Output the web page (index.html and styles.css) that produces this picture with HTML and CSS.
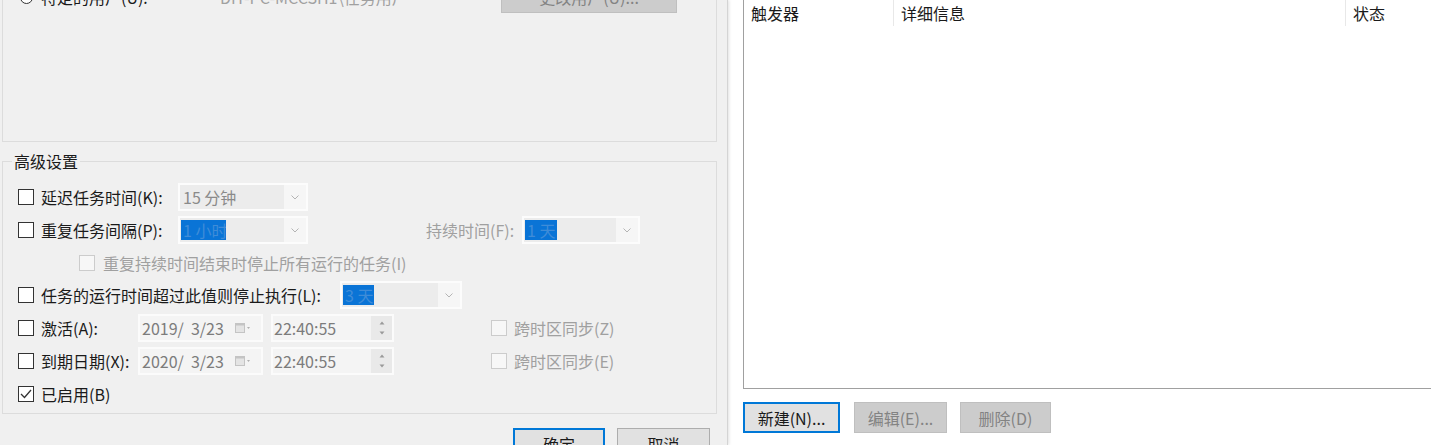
FILE: index.html
```html
<!DOCTYPE html>
<html lang="zh-CN">
<head>
    <meta charset="UTF-8">
    <title>触发器</title>
    <link rel="stylesheet" href="styles.css">
</head>
<body>
    <div class="screen">
        <div class="dialog">
            <!-- top group, mostly scrolled out of view -->
            <div class="userGroup">
                <div class="userRow">
                    <span class="radio"></span>
                    <span class="userLabel">特定的用户(U):</span>
                    <span class="userName">DIT-PC-MCCSH1\任务用户</span>
                    <button class="btn btn-disabled changeUser">更改用户(U)...</button>
                </div>
            </div>

            <fieldset class="advanced">
                <legend>高级设置</legend>
                <div class="rows">
                    <div class="row">
                        <span class="check"></span>
                        <span class="lbl lbl-wide">延迟任务时间(K):</span>
                        <div class="combo combo-main">
                            <div class="comboField"><span class="comboText">15 分钟</span></div>
                            <div class="comboArrow"><svg width="8" height="5" viewBox="0 0 8 5"><path d="M0.5 0.5 L4 4 L7.5 0.5" fill="none" stroke="#b4b4b4" stroke-width="1"/></svg></div>
                        </div>
                    </div>
                    <div class="row">
                        <span class="check"></span>
                        <span class="lbl lbl-wide">重复任务间隔(P):</span>
                        <div class="combo combo-main">
                            <div class="comboField"><span class="selected">1 小时</span></div>
                            <div class="comboArrow"><svg width="8" height="5" viewBox="0 0 8 5"><path d="M0.5 0.5 L4 4 L7.5 0.5" fill="none" stroke="#b4b4b4" stroke-width="1"/></svg></div>
                        </div>
                        <span class="lbl lbl-grey durationLabel">持续时间(F):</span>
                        <div class="combo combo-duration">
                            <div class="comboField"><span class="selected">1 天</span></div>
                            <div class="comboArrow"><svg width="8" height="5" viewBox="0 0 8 5"><path d="M0.5 0.5 L4 4 L7.5 0.5" fill="none" stroke="#b4b4b4" stroke-width="1"/></svg></div>
                        </div>
                    </div>
                    <div class="row row-sub">
                        <span class="check check-disabled"></span>
                        <span class="lbl lbl-grey">重复持续时间结束时停止所有运行的任务(I)</span>
                    </div>
                    <div class="row">
                        <span class="check"></span>
                        <span class="lbl lbl-long">任务的运行时间超过此值则停止执行(L):</span>
                        <div class="combo combo-stop">
                            <div class="comboField"><span class="selected">3 天</span></div>
                            <div class="comboArrow"><svg width="8" height="5" viewBox="0 0 8 5"><path d="M0.5 0.5 L4 4 L7.5 0.5" fill="none" stroke="#b4b4b4" stroke-width="1"/></svg></div>
                        </div>
                    </div>
                    <div class="row">
                        <span class="check"></span>
                        <span class="lbl lbl-short">激活(A):</span>
                        <div class="picker datePicker">
                            <span class="pickerText">2019/&nbsp; 3/23</span>
                            <svg class="calIcon" width="16" height="10" viewBox="0 0 16 10"><rect x="0.5" y="0.5" width="9" height="9" fill="#e4e4e4" stroke="#c4c4c4"/><rect x="0.5" y="0.5" width="9" height="2" fill="#c4c4c4"/><path d="M12 4 L15 4 L13.5 6 Z" fill="#b0b0b0"/></svg>
                        </div>
                        <div class="picker timePicker">
                            <span class="pickerText">22:40:55</span>
                            <div class="spin">
                                <svg width="6" height="4" viewBox="0 0 6 4"><path d="M3 0.5 L5.5 3.5 L0.5 3.5 Z" fill="#9a9a9a"/></svg>
                                <svg width="6" height="4" viewBox="0 0 6 4"><path d="M0.5 0.5 L5.5 0.5 L3 3.5 Z" fill="#9a9a9a"/></svg>
                            </div>
                        </div>
                        <span class="check check-disabled syncCheck"></span>
                        <span class="lbl lbl-grey">跨时区同步(Z)</span>
                    </div>
                    <div class="row">
                        <span class="check"></span>
                        <span class="lbl lbl-short">到期日期(X):</span>
                        <div class="picker datePicker">
                            <span class="pickerText">2020/&nbsp; 3/23</span>
                            <svg class="calIcon" width="16" height="10" viewBox="0 0 16 10"><rect x="0.5" y="0.5" width="9" height="9" fill="#e4e4e4" stroke="#c4c4c4"/><rect x="0.5" y="0.5" width="9" height="2" fill="#c4c4c4"/><path d="M12 4 L15 4 L13.5 6 Z" fill="#b0b0b0"/></svg>
                        </div>
                        <div class="picker timePicker">
                            <span class="pickerText">22:40:55</span>
                            <div class="spin">
                                <svg width="6" height="4" viewBox="0 0 6 4"><path d="M3 0.5 L5.5 3.5 L0.5 3.5 Z" fill="#9a9a9a"/></svg>
                                <svg width="6" height="4" viewBox="0 0 6 4"><path d="M0.5 0.5 L5.5 0.5 L3 3.5 Z" fill="#9a9a9a"/></svg>
                            </div>
                        </div>
                        <span class="check check-disabled syncCheck"></span>
                        <span class="lbl lbl-grey">跨时区同步(E)</span>
                    </div>
                    <div class="row">
                        <span class="check"><svg width="14" height="14" viewBox="0 0 14 14"><path d="M2 7 L5.5 10.5 L12 3" fill="none" stroke="#333" stroke-width="1.3"/></svg></span>
                        <span class="lbl">已启用(B)</span>
                    </div>
                </div>
            </fieldset>

            <div class="dialogButtons">
                <button class="btn btn-default okButton">确定</button>
                <button class="btn cancelButton">取消</button>
            </div>
        </div>

        <div class="triggers">
            <div class="list">
                <div class="listHead">
                    <div class="col col-trigger">触发器</div>
                    <div class="col col-detail">详细信息</div>
                    <div class="col col-status">状态</div>
                </div>
            </div>
            <div class="listButtons">
                <button class="btn btn-default newButton">新建(N)...</button>
                <button class="btn btn-disabled editButton">编辑(E)...</button>
                <button class="btn btn-disabled deleteButton">删除(D)</button>
            </div>
        </div>
    </div>
</body>
</html>
```

FILE: styles.css
```css
* {
    margin: 0;
    padding: 0;
    box-sizing: border-box;
}
html, body {
    width: 1431px;
    height: 445px;
    overflow: hidden;
}
body {
    font-family: "Noto Sans CJK SC", "Noto Sans", sans-serif;
    font-size: 16px;
    color: #1a1a1a;
    background-color: #fff;
}
.screen {
    display: flex;
    height: 445px;
}

/* left dialog */
.dialog {
    width: 728px;
    flex-shrink: 0;
    height: 100%;
    background-color: #f0f0f0;
    padding-left: 2px;
    border-right: 1px solid #d4d4d4;
    box-shadow: 1px 0 3px rgba(0, 0, 0, 0.12);
    position: relative;
    z-index: 1;
}
.userGroup {
    width: 715px;
    height: 172px;
    margin-top: -30px;
    border: 1px solid #dcdcdc;
    padding-top: 12px;
}
.userRow {
    display: flex;
    align-items: center;
    height: 28px;
}
.radio {
    width: 13px;
    height: 13px;
    border: 1px solid #333;
    border-radius: 50%;
    background-color: #fff;
    margin-left: 17px;
    margin-right: 8px;
}
.userLabel {
    width: 179px;
    line-height: 20px;
}
.userName {
    width: 281px;
    color: #a0a0a0;
    line-height: 20px;
}
.changeUser {
    width: 176px;
    height: 28px;
}

.advanced {
    width: 715px;
    margin-top: 9px;
    border: 1px solid #dcdcdc;
    padding: 12px 0 5px 15px;
    min-width: 0;
}
.advanced legend {
    margin-left: -6px;
    padding: 0 2px;
    line-height: 20px;
}
.rows {
    display: flex;
    flex-direction: column;
    gap: 5px;
}
.row {
    display: flex;
    align-items: center;
    height: 28px;
}
.row-sub {
    height: 27px;
    padding-left: 61px;
}
.check {
    width: 16px;
    height: 16px;
    flex-shrink: 0;
    border: 1px solid #333;
    background-color: #fff;
    margin-right: 7px;
    display: flex;
    align-items: center;
    justify-content: center;
}
.check-disabled {
    border-color: #cccccc;
    background-color: #f7f7f7;
    margin-right: 8px;
}
.syncCheck {
    margin-left: 97px;
    margin-right: 7px;
}
.lbl {
    line-height: 20px;
    white-space: nowrap;
}
.lbl-wide {
    width: 137px;
}
.lbl-long {
    width: 299px;
}
.lbl-short {
    width: 97px;
}
.lbl-grey {
    color: #a0a0a0;
}
.durationLabel {
    width: 96px;
    margin-left: 118px;
}

/* combo boxes */
.combo {
    display: flex;
    height: 28px;
    background-color: #fcfcfc;
    padding: 2px;
}
.combo-main {
    width: 130px;
}
.combo-duration {
    width: 118px;
}
.combo-stop {
    width: 122px;
}
.comboField {
    flex: 1;
    background-color: #ececec;
    display: flex;
    align-items: center;
    padding-left: 1px;
}
.comboText {
    color: #8a8a8a;
    padding-left: 2px;
    line-height: 20px;
}
.selected {
    background-color: #0a74d6;
    color: #3f8cd8;
    width: 45px;
    height: 20px;
    line-height: 20px;
    padding-left: 2px;
    white-space: nowrap;
    overflow: hidden;
}
.combo-duration .selected {
    width: 32px;
}
.combo-stop .selected {
    width: 31px;
}
.comboArrow {
    width: 22px;
    background-color: #f6f6f6;
    display: flex;
    align-items: center;
    justify-content: center;
}

/* date / time pickers */
.picker {
    display: flex;
    align-items: center;
    height: 28px;
    background-color: #f4f4f4;
    border: 2px solid #fbfbfb;
}
.datePicker {
    width: 125px;
    padding-left: 2px;
}
.timePicker {
    width: 123px;
    margin-left: 8px;
    padding-left: 1px;
}
.pickerText {
    flex: 1;
    color: #7c7c7c;
    line-height: 20px;
    white-space: nowrap;
}
.calIcon {
    margin-right: 10px;
}
.spin {
    width: 21px;
    height: 100%;
    background-color: #e9e9e9;
    display: flex;
    flex-direction: column;
    align-items: center;
    justify-content: space-around;
    padding: 2px 0;
}

/* buttons */
.btn {
    font-family: "Noto Sans CJK SC", "Noto Sans", sans-serif;
    font-size: 16px;
    color: #1a1a1a;
    background-color: #e1e1e1;
    border: 1px solid #adadad;
    height: 31px;
    line-height: 20px;
}
.btn-default {
    border: 2px solid #0078d7;
}
.btn-disabled {
    background-color: #cccccc;
    border-color: #bfbfbf;
    color: #838383;
}
.dialogButtons {
    display: flex;
    justify-content: flex-end;
    gap: 12px;
    width: 708px;
    margin-top: 14px;
}
.okButton {
    width: 92px;
}
.cancelButton {
    width: 93px;
}

/* right side: trigger list */
.triggers {
    flex: 1;
    overflow: hidden;
    padding-left: 15px;
}
.list {
    width: 720px;
    height: 390px;
    margin-top: -1px;
    border-left: 1px solid #a0a0a0;
    border-bottom: 1px solid #a0a0a0;
    border-top: 1px solid #a0a0a0;
}
.listHead {
    display: flex;
    height: 28px;
    padding-bottom: 2px;
}
.col {
    display: flex;
    align-items: center;
    padding-left: 7px;
    line-height: 20px;
    color: #1a1a1a;
}
.col-trigger {
    width: 150px;
    border-right: 1px solid #e8e8e8;
}
.col-detail {
    width: 452px;
    border-right: 1px solid #e8e8e8;
}
.listButtons {
    display: flex;
    gap: 13px;
    margin-top: 13px;
}
.newButton {
    width: 97px;
}
.editButton {
    width: 93px;
    margin-left: 1px;
}
.deleteButton {
    width: 91px;
}
```
